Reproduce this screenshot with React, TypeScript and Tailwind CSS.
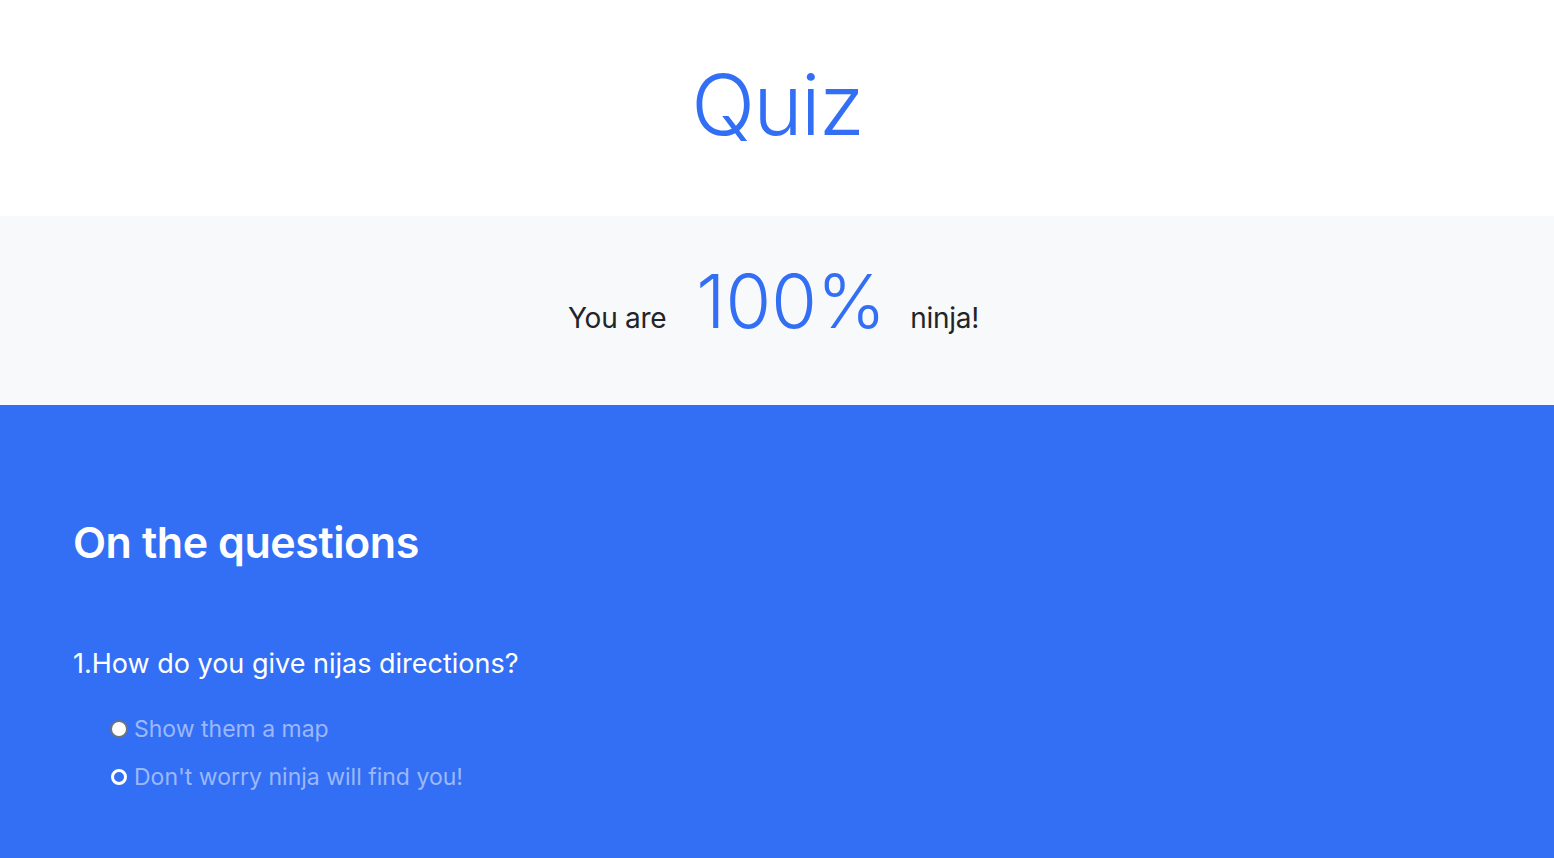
export default function App() {
  const options = ["Show them a map", "Don't worry ninja will find you!"];

  return (
    <div className="min-h-screen bg-[#336ff5] font-['Inter',sans-serif]">
      {/* Title */}
      <header className="bg-white h-[216px] pt-[63px] text-center">
        <h1 className="text-[84px] font-light leading-none tracking-[-0.02em] text-[#336ff5]">Quiz</h1>
      </header>

      {/* Result */}
      <section className="bg-[#f8f9fa] h-[189px] flex items-baseline justify-center pt-[48px] pr-[7px] text-[#212529]">
        <span className="text-[28px] font-normal tracking-[-0.01em]">You are</span>
        <span className="text-[74px] font-light text-[#336ff5] ml-[30px] mr-[24px] leading-none">100%</span>
        <span className="text-[28px] font-normal tracking-[-0.01em]">ninja!</span>
      </section>

      {/* Questions */}
      <section className="px-[73px] pt-[111px] pb-12 text-white">
        <h2 className="text-[43px] font-semibold leading-tight tracking-[-0.01em]">On the questions</h2>
        <div className="mt-[80px]">
          <p className="text-[27px] font-normal leading-none">1.How do you give nijas directions?</p>
          <div className="mt-[38px] pl-[37px] flex flex-col gap-[20px]">
            {options.map((opt, i) => (
              <label key={i} className="flex items-center gap-[6px] text-[23px] text-[#9cb8fa] leading-[28px]">
                <span className="w-[18px] h-[18px] flex items-center justify-center">
                  {i === 0 ? (
                    <span className="w-[18px] h-[18px] rounded-full bg-white border-2 border-[#6b7280]" />
                  ) : (
                    <span className="w-[16px] h-[16px] rounded-full bg-[#336ff5] border-[3px] border-white" />
                  )}
                </span>
                {opt}
              </label>
            ))}
          </div>
        </div>
      </section>
    </div>
  );
}
